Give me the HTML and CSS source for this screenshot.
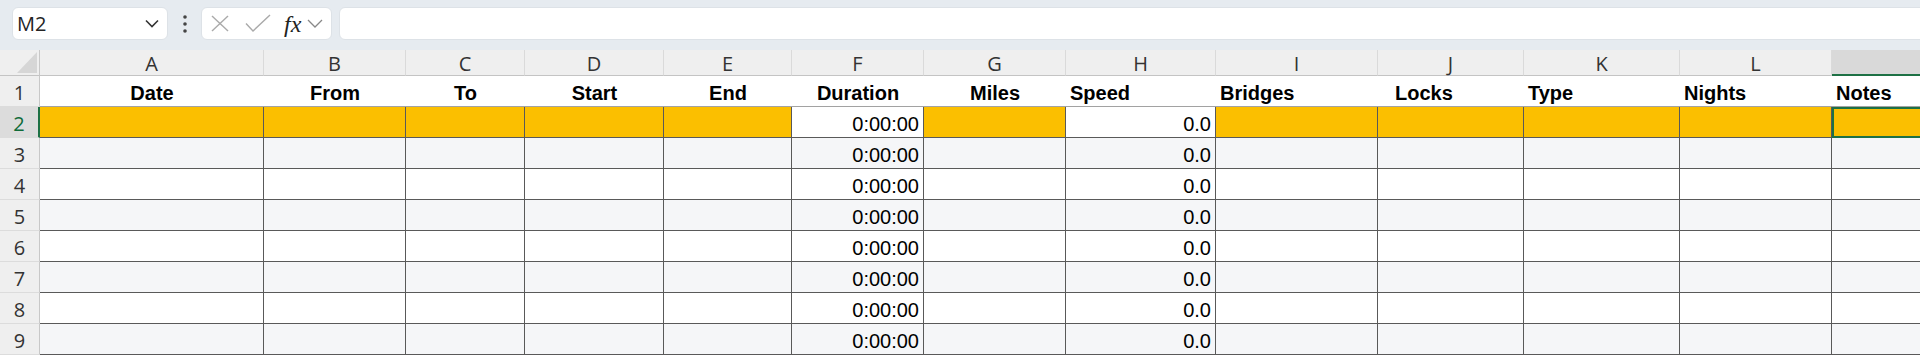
FILE: index.html
```html
<!DOCTYPE html>
<html lang="en">
<head>
    <meta charset="UTF-8">
    <meta name="viewport" content="width=device-width, initial-scale=1.0">
    <title>Boat Log</title>

    <link rel="stylesheet" href="styles.css">
</head>
<body>
    <div class="toolbar">
        <div class="namebox">
            <span>M2</span>
            <svg width="14" height="9" viewBox="0 0 14 9"><polyline points="1,1.5 7,7.5 13,1.5" fill="none" stroke="#333" stroke-width="1.6"/></svg>
        </div>
        <div class="dots">
            <svg width="6" height="18" viewBox="0 0 6 18"><circle cx="3" cy="2" r="1.8" fill="#444"/><circle cx="3" cy="9" r="1.8" fill="#444"/><circle cx="3" cy="16" r="1.8" fill="#444"/></svg>
        </div>
        <div class="fxbox">
            <svg class="ico-x" width="20" height="17" viewBox="0 0 20 17"><line x1="2" y1="1" x2="18" y2="16" stroke="#aaa" stroke-width="1.4"/><line x1="18" y1="1" x2="2" y2="16" stroke="#aaa" stroke-width="1.4"/></svg>
            <svg class="ico-ok" width="26" height="19" viewBox="0 0 26 19"><polyline points="1,9.5 8,17 25,1" fill="none" stroke="#aaa" stroke-width="1.4"/></svg>
            <span class="fx">fx</span>
            <svg class="ico-dd" width="16" height="9" viewBox="0 0 16 9"><polyline points="1,1 8,8 15,1" fill="none" stroke="#888" stroke-width="1.3"/></svg>
        </div>
        <div class="formula"></div>
    </div>

    <div class="sheet">
        <div class="row colhead">
            <div class="corner"><div class="tri"></div></div>
            <div class="ch">A</div>
            <div class="ch">B</div>
            <div class="ch">C</div>
            <div class="ch">D</div>
            <div class="ch">E</div>
            <div class="ch">F</div>
            <div class="ch">G</div>
            <div class="ch">H</div>
            <div class="ch">I</div>
            <div class="ch">J</div>
            <div class="ch">K</div>
            <div class="ch">L</div>
            <div class="ch sel"></div>
        </div>

        <div class="row title">
            <div class="rh">1</div>
            <div class="cell mid">Date</div>
            <div class="cell mid">From</div>
            <div class="cell mid">To</div>
            <div class="cell mid">Start</div>
            <div class="cell mid">End</div>
            <div class="cell mid">Duration</div>
            <div class="cell mid">Miles</div>
            <div class="cell">Speed</div>
            <div class="cell">Bridges</div>
            <div class="cell indent">Locks</div>
            <div class="cell">Type</div>
            <div class="cell">Nights</div>
            <div class="cell">Notes</div>
        </div>

        <div class="row data hl">
            <div class="rh sel">2</div>
            <div class="cell"></div>
            <div class="cell"></div>
            <div class="cell"></div>
            <div class="cell"></div>
            <div class="cell"></div>
            <div class="cell num plain">0:00:00</div>
            <div class="cell"></div>
            <div class="cell num plain">0.0</div>
            <div class="cell"></div>
            <div class="cell"></div>
            <div class="cell"></div>
            <div class="cell"></div>
            <div class="cell active"></div>
        </div>

        <div class="row data alt">
            <div class="rh">3</div>
            <div class="cell"></div><div class="cell"></div><div class="cell"></div><div class="cell"></div><div class="cell"></div>
            <div class="cell num">0:00:00</div>
            <div class="cell"></div>
            <div class="cell num">0.0</div>
            <div class="cell"></div><div class="cell"></div><div class="cell"></div><div class="cell"></div><div class="cell"></div>
        </div>

        <div class="row data">
            <div class="rh">4</div>
            <div class="cell"></div><div class="cell"></div><div class="cell"></div><div class="cell"></div><div class="cell"></div>
            <div class="cell num">0:00:00</div>
            <div class="cell"></div>
            <div class="cell num">0.0</div>
            <div class="cell"></div><div class="cell"></div><div class="cell"></div><div class="cell"></div><div class="cell"></div>
        </div>

        <div class="row data alt">
            <div class="rh">5</div>
            <div class="cell"></div><div class="cell"></div><div class="cell"></div><div class="cell"></div><div class="cell"></div>
            <div class="cell num">0:00:00</div>
            <div class="cell"></div>
            <div class="cell num">0.0</div>
            <div class="cell"></div><div class="cell"></div><div class="cell"></div><div class="cell"></div><div class="cell"></div>
        </div>

        <div class="row data">
            <div class="rh">6</div>
            <div class="cell"></div><div class="cell"></div><div class="cell"></div><div class="cell"></div><div class="cell"></div>
            <div class="cell num">0:00:00</div>
            <div class="cell"></div>
            <div class="cell num">0.0</div>
            <div class="cell"></div><div class="cell"></div><div class="cell"></div><div class="cell"></div><div class="cell"></div>
        </div>

        <div class="row data alt">
            <div class="rh">7</div>
            <div class="cell"></div><div class="cell"></div><div class="cell"></div><div class="cell"></div><div class="cell"></div>
            <div class="cell num">0:00:00</div>
            <div class="cell"></div>
            <div class="cell num">0.0</div>
            <div class="cell"></div><div class="cell"></div><div class="cell"></div><div class="cell"></div><div class="cell"></div>
        </div>

        <div class="row data">
            <div class="rh">8</div>
            <div class="cell"></div><div class="cell"></div><div class="cell"></div><div class="cell"></div><div class="cell"></div>
            <div class="cell num">0:00:00</div>
            <div class="cell"></div>
            <div class="cell num">0.0</div>
            <div class="cell"></div><div class="cell"></div><div class="cell"></div><div class="cell"></div><div class="cell"></div>
        </div>

        <div class="row data alt">
            <div class="rh">9</div>
            <div class="cell"></div><div class="cell"></div><div class="cell"></div><div class="cell"></div><div class="cell"></div>
            <div class="cell num">0:00:00</div>
            <div class="cell"></div>
            <div class="cell num">0.0</div>
            <div class="cell"></div><div class="cell"></div><div class="cell"></div><div class="cell"></div><div class="cell"></div>
        </div>
    </div>
</body>
</html>
```

FILE: styles.css
```css
body{
    margin: 0;
    width: 1920px;
    height: 356px;
    overflow: hidden;
    background-color: #fff;
    font-family: "Liberation Sans", Arial, sans-serif;
}

/* formula bar */
.toolbar{
    display: flex;
    align-items: center;
    height: 50px;
    padding: 7px 0 10px 12px;
    box-sizing: border-box;
    background-color: #e6ebf0;
}

.namebox, .fxbox, .formula{
    height: 33px;
    box-sizing: border-box;
    background-color: #fff;
    border: 1px solid #dde2e7;
    border-radius: 6px;
}

.namebox{
    width: 156px;
    display: flex;
    align-items: center;
    justify-content: space-between;
    padding: 0 8px 0 4px;
    font-family: "Open Sans", sans-serif;
    font-size: 20px;
    color: #242424;
}

.dots{
    width: 33px;
    display: flex;
    justify-content: center;
}

.fxbox{
    width: 131px;
    display: flex;
    align-items: center;
    padding-left: 8px;
}

.ico-ok{
    margin-left: 15px;
}

.fx{
    margin-left: 13px;
    font-family: "Liberation Serif", serif;
    font-style: italic;
    font-size: 24px;
    color: #222;
    line-height: 1;
}

.ico-dd{
    margin-left: 6px;
}

.formula{
    flex: 1;
    margin-left: 7px;
    margin-right: -10px;
}

/* grid */
.sheet{
    overflow: hidden;
}

.row{
    display: grid;
    grid-template-columns: 40px 224px 142px 119px 139px 128px 132px 142px 150px 162px 146px 156px 152px 220px;
    height: 31px;
}

.colhead{
    height: 26px;
}

.corner, .ch, .rh{
    box-sizing: border-box;
    background-color: #efefef;
    font-family: "Open Sans", sans-serif;
    font-size: 20px;
    line-height: 20px;
    color: #333;
}

.corner{
    display: flex;
    justify-content: flex-end;
    align-items: flex-end;
    padding: 0 2px 2px 0;
    border-right: 1px solid #c8c8c8;
    border-bottom: 1px solid #c4c4c4;
}

.tri{
    width: 20px;
    height: 21px;
    background-color: #d6d6d6;
    clip-path: polygon(100% 0, 100% 100%, 0 100%);
}

.ch{
    display: flex;
    justify-content: center;
    align-items: flex-end;
    padding-bottom: 1px;
    border-right: 1px solid #dadada;
    border-bottom: 1px solid #c4c4c4;
}

.ch.sel{
    background-color: #d9d9d9;
    border-bottom: 2px solid #1e7145;
    padding-bottom: 0;
}

.rh{
    display: flex;
    justify-content: center;
    align-items: flex-end;
    padding-bottom: 3px;
    border-right: 1px solid #c8c8c8;
    border-bottom: 1px solid #dcdcdc;
}

.rh.sel{
    background-color: #dcdcdc;
    color: #0f6b39;
    border-right: 2px solid #1e7145;
}

.cell{
    box-sizing: border-box;
    display: flex;
    align-items: flex-end;
    padding: 0 4px 1px 4px;
    font-size: 20px;
    white-space: nowrap;
    color: #000;
}

.title .cell{
    font-weight: bold;
    border-bottom: 1px solid #a2a2a2;
}

.title .indent{
    padding-left: 17px;
}

.mid{
    justify-content: center;
}

.data .cell{
    border-right: 1px solid #595959;
    border-bottom: 1px solid #595959;
}

.alt .cell{
    background-color: #f5f6f8;
}

.hl .cell{
    background-color: #fbbf00;
}

.hl .plain{
    background-color: #fff;
}

.num{
    justify-content: flex-end;
}

.hl .active{
    background-color: #fbbf00;
    border: 2px solid #1e7145;
}
```
